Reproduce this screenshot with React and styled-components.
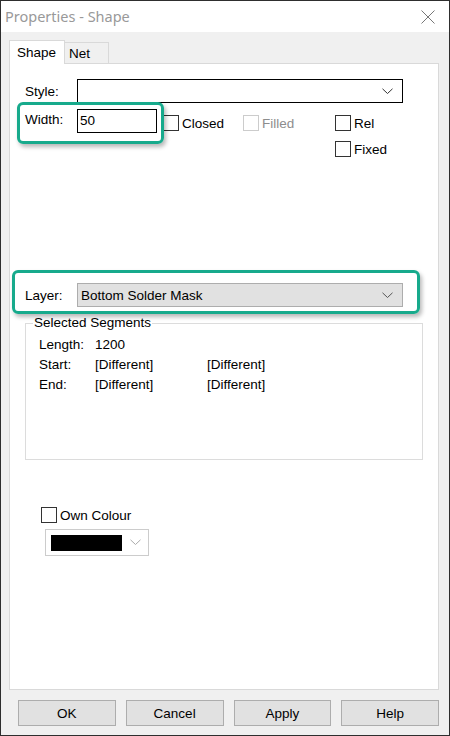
import React from "react";
import styled, { createGlobalStyle } from "styled-components";

const Global = createGlobalStyle`
  html, body { margin: 0; padding: 0; background: #f0f0f0; }
  body { font-family: "Liberation Sans", Arial, sans-serif; font-size: 13.5px; color: #000; }
  * { box-sizing: border-box; }
`;

const Window = styled.div`
  width: 450px;
  height: 736px;
  border: 1px solid #2e2e2e;
  background: #f0f0f0;
  display: flex;
  flex-direction: column;
  overflow: hidden;
`;

const TitleBar = styled.div`
  height: 31px;
  background: #fff;
  display: flex;
  align-items: center;
  justify-content: space-between;
  padding: 0 14px 0 4px;
  flex-shrink: 0;
`;

const Title = styled.span`
  font-family: "Noto Sans", "Open Sans", sans-serif;
  font-size: 14.5px;
  color: #999;
  margin-top: -1px;
`;

const Body = styled.div`
  flex: 1;
  display: flex;
  flex-direction: column;
  padding: 8px 10px 9px 8px;
`;

const TabBar = styled.div`
  display: flex;
  align-items: flex-end;
  height: 24px;
  margin-bottom: -1px;
  position: relative;
  z-index: 1;
`;

const Tab = styled.div`
  display: flex;
  align-items: center;
  background: ${(p) => (p.$active ? "#fff" : "#f0f0f0")};
  border: 1px solid #d9d9d9;
  border-bottom: none;
  ${(p) => (p.$active ? "" : "border-left: none;")}
  height: ${(p) => (p.$active ? "24px" : "21px")};
  margin-bottom: ${(p) => (p.$active ? "0" : "1px")};
  width: ${(p) => p.$w}px;
  padding-left: ${(p) => (p.$active ? "7px" : "4px")};
  padding-top: ${(p) => (p.$active ? "0" : "1px")};
`;

const Panel = styled.div`
  height: 627px;
  background: #fff;
  border: 1px solid #d9d9d9;
  position: relative;
  padding: 15px 0 0 15px;
  display: flex;
  flex-direction: column;
  align-items: flex-start;
`;

const Row = styled.div`
  display: flex;
  align-items: ${(p) => p.$align || "center"};
  margin-top: ${(p) => p.$mt || 0}px;
`;

const Label = styled.div`
  width: 52px;
  flex-shrink: 0;
  margin-top: ${(p) => p.$mt || 0}px;
`;

const Combo = styled.div`
  width: 326px;
  height: 24px;
  border: 1px solid ${(p) => (p.$grey ? "#adadad" : "#000")};
  background: ${(p) => (p.$grey ? "#e1e1e1" : "#fff")};
  display: flex;
  align-items: center;
  justify-content: space-between;
  padding: 0 9px 0 3px;
`;

const Input = styled.div`
  width: 80px;
  height: 24px;
  border: 1px solid #000;
  padding: 3px 0 0 2px;
`;

const Checks = styled.div`
  display: flex;
  align-items: flex-start;
  margin-top: 6px;
  margin-left: 6px;
`;

const CheckCol = styled.div`
  display: flex;
  flex-direction: column;
  gap: 10px;
`;

const CheckItem = styled.label`
  display: flex;
  align-items: center;
  width: ${(p) => (p.$w ? p.$w + "px" : "auto")};
  color: ${(p) => (p.$disabled ? "#8d8d8d" : "#000")};
  margin-left: ${(p) => p.$ml || 0}px;
  margin-top: ${(p) => p.$mt || 0}px;
`;

const Box = styled.span`
  width: 16px;
  height: 16px;
  border: 1px solid ${(p) => (p.$disabled ? "#cccccc" : "#333")};
  background: #fff;
  margin-right: 3px;
  flex-shrink: 0;
`;

const Group = styled.fieldset`
  width: 398px;
  height: 145px;
  margin: 8px 0 0 0;
  border: 1px solid #dcdcdc;
  padding: 3px 0 0 13px;
`;

const Legend = styled.legend`
  padding: 0 1px;
  margin-left: -6px;
  line-height: 16px;
`;

const InfoGrid = styled.div`
  display: grid;
  grid-template-columns: 56px 112px auto;
  grid-auto-rows: 20px;
  align-items: center;
`;

const ColourCombo = styled.div`
  width: 104px;
  height: 27px;
  border: 1px solid #cccccc;
  margin: 6px 0 0 20px;
  display: flex;
  align-items: center;
  padding: 0 7px 0 5px;
  justify-content: space-between;
`;

const Swatch = styled.div`
  width: 71px;
  height: 16px;
  background: #000;
`;

const Highlight = styled.div`
  position: absolute;
  left: ${(p) => p.$x}px;
  top: ${(p) => p.$y}px;
  width: ${(p) => p.$w}px;
  height: ${(p) => p.$h}px;
  border: 3.5px solid #17aa8c;
  border-radius: 6px;
  box-shadow: 2px 3px 4px rgba(0, 0, 0, 0.28);
  pointer-events: none;
`;

const Buttons = styled.div`
  display: flex;
  gap: 10px;
  margin: 10px 0 0 9px;
`;

const Button = styled.button`
  width: 98px;
  height: 26px;
  background: #e1e1e1;
  border: 1px solid #adadad;
  font-family: "Liberation Sans", Arial, sans-serif;
  font-size: 13.5px;
  color: #000;
  padding: 0;
`;

const Chevron = ({ color = "#333" }) => (
  <svg width="11" height="7" viewBox="0 0 11 7">
    <path d="M0.5 0.8 L5.5 5.5 L10.5 0.8" fill="none" stroke={color} strokeWidth="1" />
  </svg>
);

const CloseIcon = () => (
  <svg width="14" height="14" viewBox="0 0 14 14">
    <path d="M0.5 0.5 L13.5 13.5 M13.5 0.5 L0.5 13.5" stroke="#777" strokeWidth="1" />
  </svg>
);

const Check = ({ children, disabled, ...rest }) => (
  <CheckItem $disabled={disabled} {...rest}>
    <Box $disabled={disabled} />
    {children}
  </CheckItem>
);

export default function App() {
  return (
    <>
      <Global />
      <Window>
        <TitleBar>
          <Title>Properties - Shape</Title>
          <CloseIcon />
        </TitleBar>
        <Body>
          <TabBar>
            <Tab $active $w={56}>Shape</Tab>
            <Tab $w={44}>Net</Tab>
          </TabBar>
          <Panel>
            <Row>
              <Label>Style:</Label>
              <Combo>
                <span />
                <Chevron />
              </Combo>
            </Row>
            <Row $mt={6} $align="flex-start">
              <Label $mt={3}>Width:</Label>
              <Input>50</Input>
              <Checks>
                <Check $w={80}>Closed</Check>
                <Check $w={92} disabled>
                  Filled
                </Check>
                <CheckCol>
                  <Check>Rel</Check>
                  <Check>Fixed</Check>
                </CheckCol>
              </Checks>
            </Row>
            <Row $mt={126}>
              <Label>Layer:</Label>
              <Combo $grey>
                <span>Bottom Solder Mask</span>
                <Chevron color="#555" />
              </Combo>
            </Row>
            <Group>
              <Legend>Selected Segments</Legend>
              <InfoGrid>
                <span>Length:</span>
                <span>1200</span>
                <span />
                <span>Start:</span>
                <span>[Different]</span>
                <span>[Different]</span>
                <span>End:</span>
                <span>[Different]</span>
                <span>[Different]</span>
              </InfoGrid>
            </Group>
            <Check $ml={16} $mt={47}>
              Own Colour
            </Check>
            <ColourCombo>
              <Swatch />
              <Chevron color="#aaa" />
            </ColourCombo>
            <Highlight $x={7} $y={38} $w={147} $h={42} />
            <Highlight $x={2} $y={206} $w={408} $h={44} />
          </Panel>
          <Buttons>
            <Button>OK</Button>
            <Button>Cancel</Button>
            <Button>Apply</Button>
            <Button>Help</Button>
          </Buttons>
        </Body>
      </Window>
    </>
  );
}
